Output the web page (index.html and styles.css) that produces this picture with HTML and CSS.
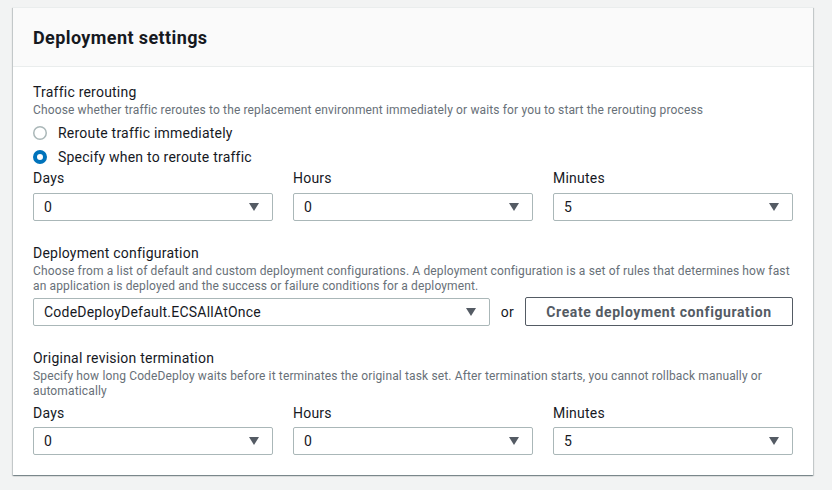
FILE: index.html
```html
<!DOCTYPE html>
<html>
<head>
<meta charset="utf-8">
<link rel="stylesheet" href="styles.css">
</head>
<body>
<div class="card">
  <div class="card-header"><h2 class="title">Deployment settings</h2></div>
  <div class="card-body">
    <div class="section">
      <div class="label">Traffic rerouting</div>
      <div class="desc">Choose whether traffic reroutes to the replacement environment immediately or waits for you to start the rerouting process</div>
      <div class="radios">
        <div class="radio-row">
          <svg class="radio" width="14" height="14" viewBox="0 0 14 14"><circle cx="7" cy="7" r="6.25" fill="#fff" stroke="#aab7b8" stroke-width="1.5"/></svg>
          <span class="radio-text">Reroute traffic immediately</span>
        </div>
        <div class="radio-row">
          <svg class="radio" width="14" height="14" viewBox="0 0 14 14"><circle cx="7" cy="7" r="5" fill="#fff" stroke="#0073bb" stroke-width="4"/></svg>
          <span class="radio-text">Specify when to reroute traffic</span>
        </div>
      </div>
      <div class="triple">
        <div class="field"><div class="flabel">Days</div><div class="select"><span>0</span><span class="caret"></span></div></div>
        <div class="field"><div class="flabel">Hours</div><div class="select"><span>0</span><span class="caret"></span></div></div>
        <div class="field"><div class="flabel">Minutes</div><div class="select"><span>5</span><span class="caret"></span></div></div>
      </div>
    </div>
    <div class="section">
      <div class="label">Deployment configuration</div>
      <div class="desc">Choose from a list of default and custom deployment configurations. A deployment configuration is a set of rules that determines how fast an application is deployed and the success or failure conditions for a deployment.</div>
      <div class="config-row">
        <div class="select grow"><span>CodeDeployDefault.ECSAllAtOnce</span><span class="caret"></span></div>
        <span class="or">or</span>
        <button class="btn">Create deployment configuration</button>
      </div>
    </div>
    <div class="section">
      <div class="label">Original revision termination</div>
      <div class="desc">Specify how long CodeDeploy waits before it terminates the original task set. After termination starts, you cannot rollback manually or automatically</div>
      <div class="triple tight">
        <div class="field"><div class="flabel">Days</div><div class="select"><span>0</span><span class="caret"></span></div></div>
        <div class="field"><div class="flabel">Hours</div><div class="select"><span>0</span><span class="caret"></span></div></div>
        <div class="field"><div class="flabel">Minutes</div><div class="select"><span>5</span><span class="caret"></span></div></div>
      </div>
    </div>
  </div>
</div>
</body>
</html>
```

FILE: styles.css
```css
* { box-sizing: border-box; }
html, body { margin: 0; }
body {
  background: #f2f3f3;
  padding: 7px 0 0 13px;
  font-family: Roboto, "Liberation Sans", sans-serif;
  color: #16191f;
  letter-spacing: 0.22px;
  height: 490px;
  overflow: hidden;
}
.card {
  width: 800px;
  background: #fff;
  border-top: 1px solid #eaeded;
  box-shadow: 0 1px 1px 0 rgba(0,28,36,.3), 1px 1px 1px 0 rgba(0,28,36,.15), -1px 1px 1px 0 rgba(0,28,36,.15);
}
.card-header {
  background: #fafafa;
  border-bottom: 1px solid #eaeded;
  padding: 20px 20px 18px;
}
.title {
  margin: 0;
  font-size: 18px;
  line-height: 20px;
  font-weight: 700;
  letter-spacing: 0.4px;
  color: #16191f;
}
.card-body { padding: 14px 20px 20px; }
.section + .section { margin-top: 21px; }
.label { font-size: 14px; line-height: 20px; padding-top: 1px; }
.desc { font-size: 12px; line-height: 15px; margin-top: 1px; color: #687078; letter-spacing: 0.14px; }
.radios { margin-top: 3px; }
.radio-row { display: flex; align-items: center; height: 24px; }
.radio { flex: none; margin-right: 11px; }
.radio-text { font-size: 14px; }
.triple { display: grid; grid-template-columns: repeat(3, 1fr); gap: 20px; }
.flabel { font-size: 14px; line-height: 18px; margin-bottom: 6px; }
.tight { margin-top: 4px; }
.tight .flabel { padding-top: 1px; margin-bottom: 5px; }
.select {
  height: 28px;
  border: 1px solid #aab7b8;
  border-radius: 2px;
  padding: 0 13px 0 10px;
  display: flex;
  align-items: center;
  justify-content: space-between;
  font-size: 14px;
  color: #16191f;
}
.caret {
  width: 0; height: 0;
  border-left: 5.5px solid transparent;
  border-right: 5.5px solid transparent;
  border-top: 8px solid #545b64;
}
.config-row { display: flex; align-items: center; margin-top: 3px; }
.grow { flex: 1; }
.or { font-size: 14px; margin: 0 11px; color: #16191f; }
.btn {
  height: 29px;
  width: 268px;
  background: #fff;
  border: 1px solid #545b64;
  border-radius: 2px;
  font-family: inherit;
  font-size: 14px;
  font-weight: 700;
  letter-spacing: 0.6px;
  color: #545b64;
  padding: 0 10px;
}
```
